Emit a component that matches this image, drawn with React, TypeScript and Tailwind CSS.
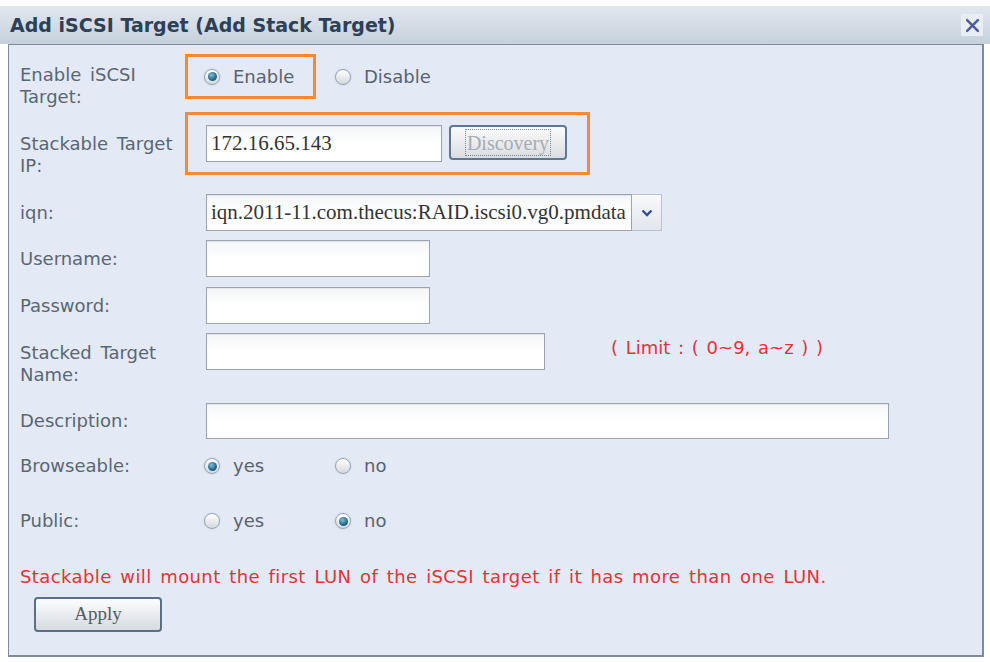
import React from "react";

const labelFont = { fontFamily: '"DejaVu Sans", Verdana, sans-serif' } as const;
const serif = { fontFamily: '"Liberation Serif", "Times New Roman", serif' } as const;

function Radio({ checked }: { checked?: boolean }) {
  return (
    <span className="relative inline-flex h-[16px] w-[16px] shrink-0 items-center justify-center rounded-full border border-[#9aa5b1] bg-gradient-to-b from-[#ffffff] to-[#d3d9e0] shadow-[0_0_2px_#b9c3ce]">
      {checked && (
        <span className="h-[9px] w-[9px] rounded-full bg-[radial-gradient(circle_at_40%_35%,#86bdd6,#1f6687_60%,#164e69)]" />
      )}
    </span>
  );
}

function RadioOpt({ checked, text }: { checked?: boolean; text: string }) {
  return (
    <span className="flex items-center gap-[13px]">
      <Radio checked={checked} />
      <span className="text-[18px] leading-[22px] text-[#59636f]">{text}</span>
    </span>
  );
}

function TextInput({ w, value }: { w: string; value?: string }) {
  return (
    <div
      className={`${w} flex h-[37px] items-center overflow-hidden whitespace-nowrap border border-[#9ba3ac] bg-gradient-to-b from-[#f3f5f7] via-white to-white px-[4px] text-[21px] text-[#333] shadow-[inset_0_1px_0_#e3e6ea]`}
      style={serif}
    >
      {value}
    </div>
  );
}

export default function App() {
  return (
    <div className="h-[662px] w-[990px] overflow-hidden bg-white pt-[6px]" style={labelFont}>
      {/* title bar */}
      <div className="flex h-[38px] items-center justify-between bg-gradient-to-b from-[#e2e7ee] to-[#c6d1dd] pl-[10px] pr-[7px]">
        <span className="text-[19px] font-bold text-[#2e4055]">Add iSCSI Target (Add Stack Target)</span>
        <span className="flex h-[22px] w-[22px] items-center justify-center bg-[#e9eef5]">
          <svg width="15" height="15" viewBox="0 0 14 14">
            <path d="M2 2 L12 12 M12 2 L2 12" stroke="#4f5d9c" strokeWidth="2.4" strokeLinecap="round" />
          </svg>
        </span>
      </div>

      {/* content */}
      <div className="ml-[8px] h-[613px] w-[976px] border border-r-2 border-b-2 border-[#7f8b99] bg-[#e3eaf5] pl-[11px] pt-[9px] text-[18px] text-[#5b6673] [word-spacing:3px]">
        {/* row 1 */}
        <div className="flex h-[45px]">
          <div className="mt-[10px] w-[165px] leading-[22px]">
            Enable iSCSI
            <br />
            Target:
          </div>
          <div className="flex items-center">
            <div className="flex h-[45px] w-[131px] items-center border-[3px] border-[#f08a3c] pl-[16px]">
              <RadioOpt checked text="Enable" />
            </div>
            <div className="ml-[19px]">
              <RadioOpt text="Disable" />
            </div>
          </div>
        </div>

        {/* row 2 */}
        <div className="mt-[13px] flex h-[63px]">
          <div className="mt-[21px] w-[165px] whitespace-nowrap leading-[22px]">
            Stackable Target
            <br />
            IP:
          </div>
          <div className="flex h-[63px] w-[405px] items-start gap-[7px] border-[3px] border-[#f08a3c] pl-[18px] pt-[10px]">
            <TextInput w="w-[236px]" value="172.16.65.143" />
            <button className="flex h-[35px] w-[118px] items-center justify-center rounded-[4px] border-2 border-[#5f7892] bg-gradient-to-b from-[#fbfbfb] to-[#d9dde2]">
              <span
                className="flex h-[27px] w-[86px] items-center justify-center border border-dotted border-[#7d838a] text-[20px] leading-[20px] text-[#a6acb3]"
                style={serif}
              >
                Discovery
              </span>
            </button>
          </div>
        </div>

        {/* row 3 iqn */}
        <div className="mt-[19px] flex h-[37px] items-center">
          <div className="w-[165px] leading-[22px]">iqn:</div>
          <div className="ml-[21px] flex">
            <TextInput w="w-[426px]" value="iqn.2011-11.com.thecus:RAID.iscsi0.vg0.pmdata" />
            <div className="flex h-[37px] w-[30px] items-center justify-center border border-l-0 border-[#b9c1ca] bg-gradient-to-b from-[#f8f9fb] to-[#e2e7ed]">
              <svg width="12" height="8" viewBox="0 0 12 8">
                <path d="M1.5 1.5 L6 6 L10.5 1.5" stroke="#34508a" strokeWidth="2.4" fill="none" />
              </svg>
            </div>
          </div>
        </div>

        {/* row 4 username */}
        <div className="mt-[9px] flex h-[37px] items-center">
          <div className="w-[165px] leading-[22px]">Username:</div>
          <div className="ml-[21px]">
            <TextInput w="w-[224px]" />
          </div>
        </div>

        {/* row 5 password */}
        <div className="mt-[10px] flex h-[37px] items-center">
          <div className="w-[165px] leading-[22px]">Password:</div>
          <div className="ml-[21px]">
            <TextInput w="w-[224px]" />
          </div>
        </div>

        {/* row 6 stacked name */}
        <div className="mt-[9px] flex h-[70px] items-start">
          <div className="mt-[9px] w-[165px] leading-[22px]">
            Stacked Target
            <br />
            Name:
          </div>
          <div className="ml-[21px]">
            <TextInput w="w-[339px]" />
          </div>
          <div className="ml-[66px] mt-[4px] whitespace-nowrap leading-[22px] text-[#e2333a] [word-spacing:2px]">
            ( Limit : ( 0~9, a~z ) )
          </div>
        </div>

        {/* row 7 description */}
        <div className="flex h-[36px] items-center">
          <div className="w-[165px] leading-[22px]">Description:</div>
          <div className="ml-[21px]">
            <TextInput w="w-[683px] !h-[36px]" />
          </div>
        </div>

        {/* row 8 browseable */}
        <div className="mt-[16px] flex h-[22px] items-center">
          <div className="w-[165px] leading-[22px]">Browseable:</div>
          <div className="ml-[19px] flex items-center">
            <div className="w-[131px]">
              <RadioOpt checked text="yes" />
            </div>
            <RadioOpt text="no" />
          </div>
        </div>

        {/* row 9 public */}
        <div className="mt-[33px] flex h-[22px] items-center">
          <div className="w-[165px] leading-[22px]">Public:</div>
          <div className="ml-[19px] flex items-center">
            <div className="w-[131px]">
              <RadioOpt text="yes" />
            </div>
            <RadioOpt checked text="no" />
          </div>
        </div>

        {/* message */}
        <div className="mt-[34px] h-[22px] whitespace-nowrap leading-[22px] tracking-[0.4px] text-[#e2333a] [word-spacing:2.5px]">
          Stackable will mount the first LUN of the iSCSI target if it has more than one LUN.
        </div>

        {/* apply */}
        <div className="ml-[14px] mt-[9px]">
          <button
            className="flex h-[35px] w-[128px] items-center justify-center rounded-[4px] border-2 border-[#587089] bg-gradient-to-b from-[#fdfdfd] to-[#d6dbe1] text-[19px] text-[#555b62]"
            style={serif}
          >
            Apply
          </button>
        </div>
      </div>
    </div>
  );
}
